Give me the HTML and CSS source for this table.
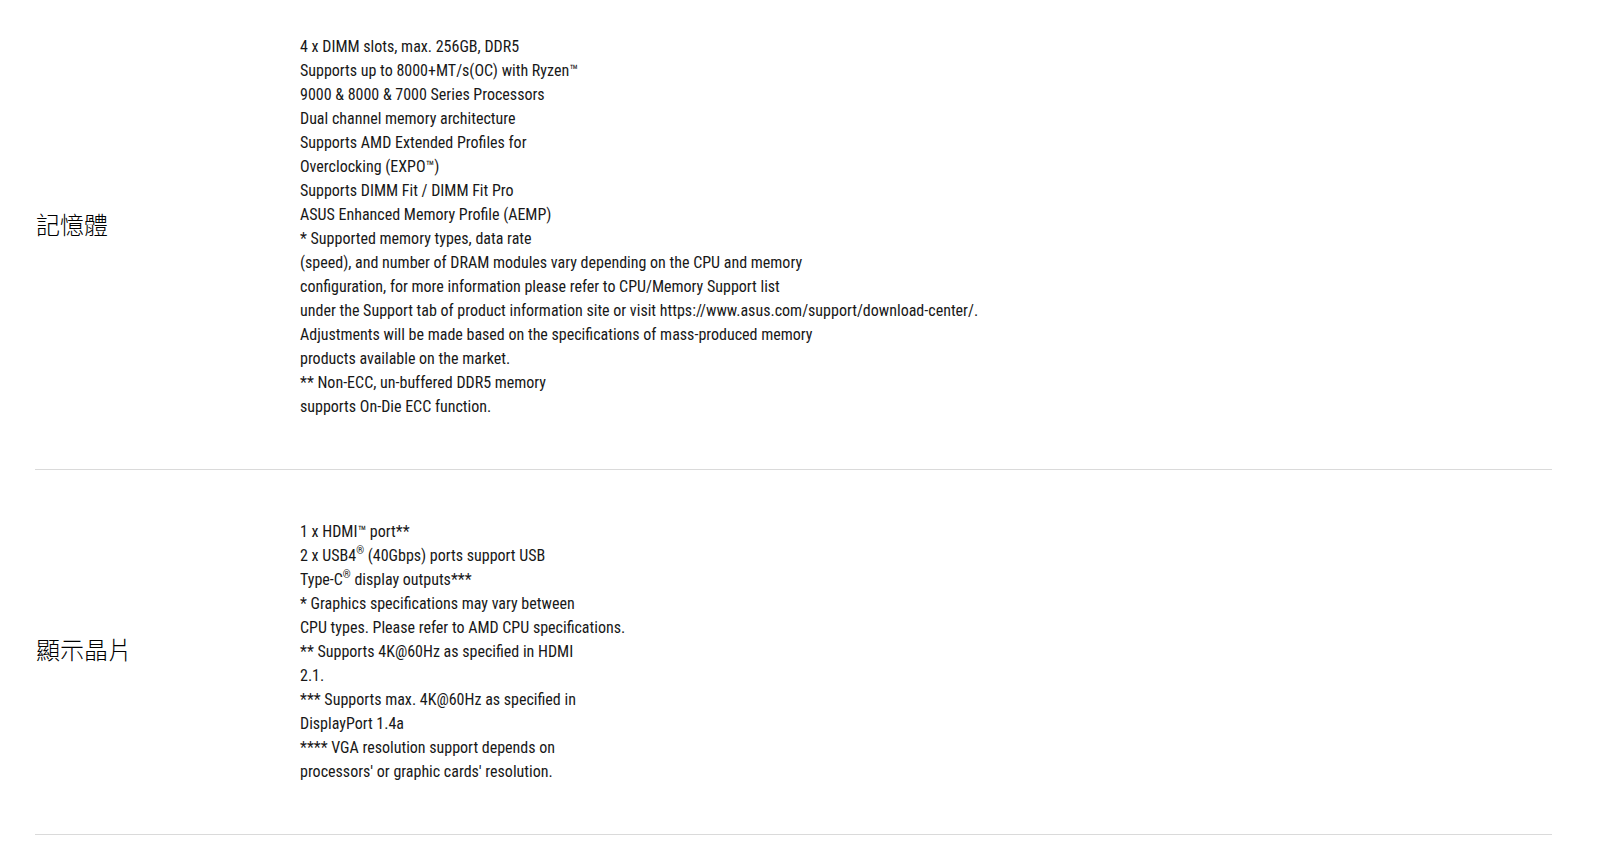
FILE: index.html
```html
<!DOCTYPE html>
<html lang="zh-Hant">
<head>
    <meta charset="UTF-8">
    <meta name="viewport" content="width=device-width, initial-scale=1.0">
    <title>技術規格</title>
    <link rel="stylesheet" href="styles.css">
</head>
<body>
   <div class="spec-table">
    <div class="spec-row">
        <div class="spec-title">記憶體</div>
        <div class="spec-content">
            4 x DIMM slots, max. 256GB, DDR5<br>
            Supports up to 8000+MT/s(OC) with Ryzen™<br>
            9000 &amp; 8000 &amp; 7000 Series Processors<br>
            Dual channel memory architecture<br>
            Supports AMD Extended Profiles for<br>
            Overclocking (EXPO™)<br>
            Supports DIMM Fit / DIMM Fit Pro<br>
            ASUS Enhanced Memory Profile (AEMP)<br>
            * Supported memory types, data rate<br>
            (speed), and number of DRAM modules vary depending on the CPU and memory<br>
            configuration, for more information please refer to CPU/Memory Support list<br>
            under the Support tab of product information site or visit https://www.asus.com/support/download-center/.<br>
            Adjustments will be made based on the specifications of mass-produced memory<br>
            products available on the market.<br>
            ** Non-ECC, un-buffered DDR5 memory<br>
            supports On-Die ECC function.
        </div>
    </div>
    <div class="spec-row">
        <div class="spec-title">顯示晶片</div>
        <div class="spec-content">
            1 x HDMI™ port**<br>
            2 x USB4<sup>®</sup> (40Gbps) ports support USB<br>
            Type-C<sup>®</sup> display outputs***<br>
            * Graphics specifications may vary between<br>
            CPU types. Please refer to AMD CPU specifications.<br>
            ** Supports 4K@60Hz as specified in HDMI<br>
            2.1.<br>
            *** Supports max. 4K@60Hz as specified in<br>
            DisplayPort 1.4a<br>
            **** VGA resolution support depends on<br>
            processors' or graphic cards' resolution.
        </div>
    </div>
   </div>
</body>
</html>
```

FILE: styles.css
```css
body {
    margin: 0;
    background-color: #fff;
    font-family: "Roboto Condensed", "Roboto", "Noto Sans CJK TC", sans-serif;
    font-stretch: 75%;
    color: #181818;
}

.spec-table {
    margin: 0 52px 0 35px;
}

.spec-row {
    display: flex;
    align-items: center;
    padding: 50px 0;
    border-bottom: 1px solid #dadada;
}

.spec-row:first-child {
    padding-top: 35px;
}

.spec-title {
    width: 264px;
    flex-shrink: 0;
    padding-left: 1px;
    padding-bottom: 7px;
    font-family: "Noto Sans CJK TC", sans-serif;
    font-size: 24px;
    font-weight: 300;
    color: #000;
}

.spec-content {
    font-size: 16px;
    line-height: 24px;
}

.spec-content sup {
    font-size: 10px;
    line-height: 0;
    vertical-align: 7px;
}
```
